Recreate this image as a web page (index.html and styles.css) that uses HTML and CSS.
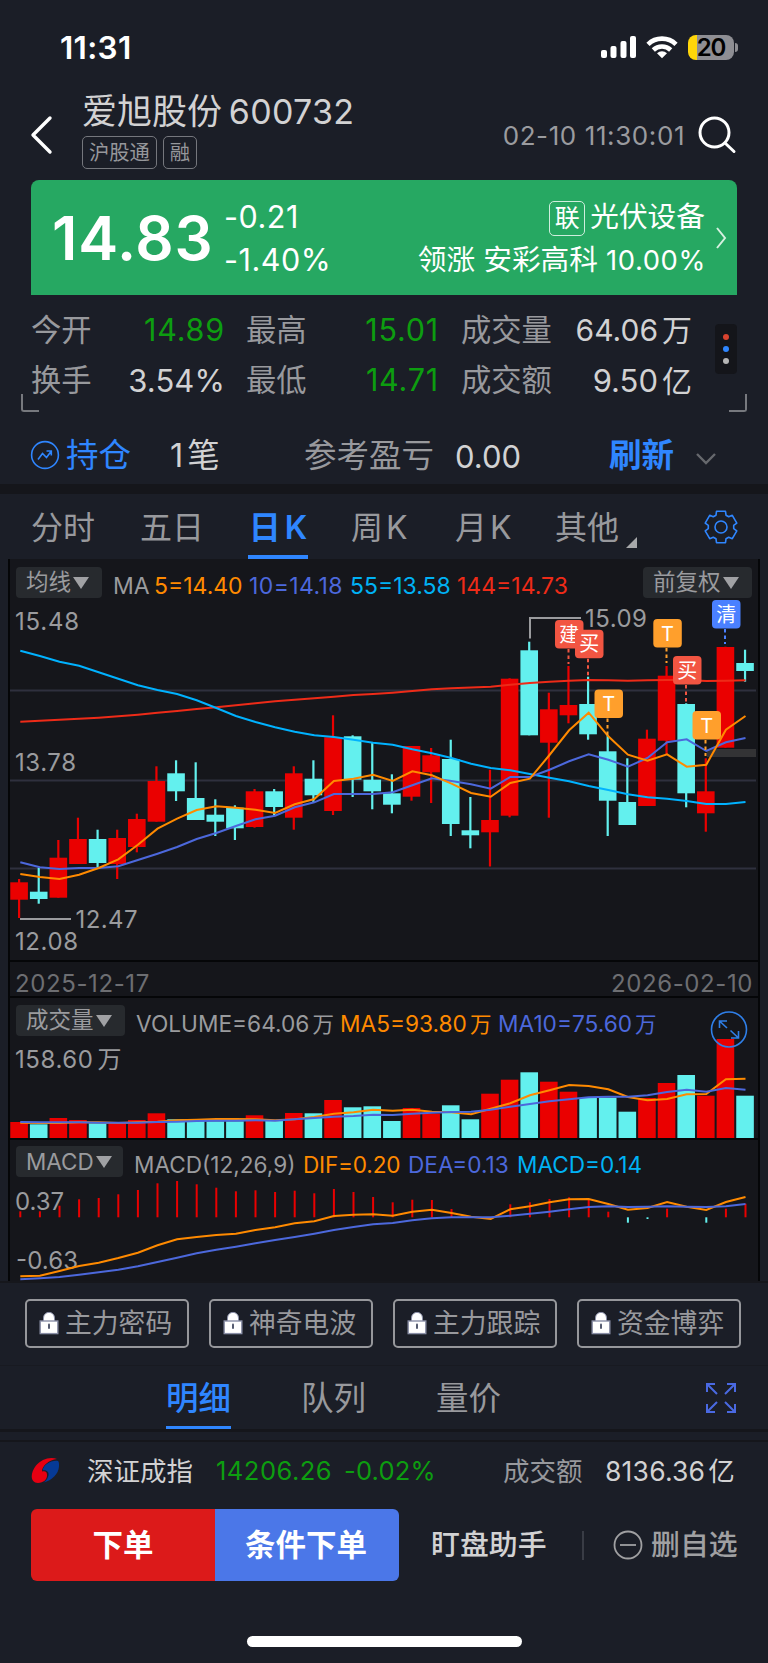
FILE: index.html
```html
<!DOCTYPE html>
<html lang="zh-CN">
<head>
    <meta charset="utf-8">
    <meta name="viewport" content="width=device-width, initial-scale=1">
    <title>爱旭股份 600732</title>
    <link rel="stylesheet" href="styles.css">
</head>
<body>

    <div class="status">
        <span class="time">11:31</span>
        <svg class="signal" width="36" height="24" viewBox="0 0 36 24" fill="#fff">
            <rect x="0" y="15" width="6" height="8" rx="2"/>
            <rect x="9.5" y="11" width="6" height="12" rx="2"/>
            <rect x="19.5" y="6" width="6" height="17" rx="2"/>
            <rect x="29" y="1" width="6" height="22" rx="2"/>
        </svg>
        <svg class="wifi" width="32" height="24" viewBox="0 0 32 24" fill="none" stroke="#fff" stroke-width="4.6">
            <path d="M2 9.3 A20 20 0 0 1 30 9.3"/>
            <path d="M7.3 15 A12.6 12.6 0 0 1 24.7 15"/>
            <path d="M16 23.3 L11 18.2 A7.2 7.2 0 0 1 21 18.2 Z" fill="#fff" stroke="none"/>
        </svg>
        <div class="battery"><span>20</span></div>
        <div class="nub"></div>
    </div>

    <div class="header">
        <svg class="back" width="24" height="42" viewBox="0 0 24 42" fill="none" stroke="#fff" stroke-width="3.4" stroke-linecap="round" stroke-linejoin="round">
            <path d="M20 4 L3 21 L20 38"/>
        </svg>
        <div class="title">
            <div class="name">爱旭股份 <span>600732</span></div>
            <div class="tags"><span>沪股通</span><span>融</span></div>
        </div>
        <div class="clock">02-10 11:30:01</div>
        <svg class="search" width="40" height="40" viewBox="0 0 40 40" fill="none" stroke="#fff" stroke-width="3" stroke-linecap="round">
            <circle cx="17.5" cy="17.5" r="14.5"/>
            <path d="M28 28 L37 36.5"/>
        </svg>
    </div>

    <div class="banner">
        <div class="price">14.83</div>
        <div class="change">
            <div>-0.21</div>
            <div>-1.40%</div>
        </div>
        <div class="sector">
            <div><span class="link">联</span>光伏设备</div>
            <div class="leader">领涨 安彩高科 <span>10.00%</span></div>
        </div>
        <svg width="13" height="22" viewBox="0 0 13 22" fill="none" stroke="#d6f0e0" stroke-width="2">
            <path d="M2 1 L10 11 L2 21"/>
        </svg>
    </div>

    <div class="stats">
        <div class="grid">
            <span class="label">今开</span><span class="val down">14.89</span>
            <span class="label">最高</span><span class="val down">15.01</span>
            <span class="label">成交量</span><span class="val">64.06<i>万</i></span>
            <span class="label">换手</span><span class="val pct">3.54%</span>
            <span class="label">最低</span><span class="val down">14.71</span>
            <span class="label">成交额</span><span class="val amt">9.50<i>亿</i></span>
        </div>
        <div class="more"><b class="red"></b><b class="blue"></b><b></b></div>
    </div>
    <div class="corners"><i class="left"></i><i class="right"></i></div>

    <div class="position">
        <svg width="30" height="30" viewBox="0 0 30 30" fill="none" stroke="#2f86ff" stroke-width="1.6">
            <circle cx="15" cy="15" r="13.4"/>
            <path d="M8 19.5 L12.5 13.5 L16.5 17.5 L21 11.5 M16.5 11 H21.3 V15.5"/>
        </svg>
        <span class="hold">持仓</span>
        <span class="count">1<i>笔</i></span>
        <span class="ref">参考盈亏</span>
        <span class="zero">0.00</span>
        <span class="refresh">刷新</span>
        <svg width="22" height="14" viewBox="0 0 22 14" fill="none" stroke="#66686d" stroke-width="2.4"><path d="M2 2 L11 11 L20 2"/></svg>
    </div>

    <div class="tabs">
        <span class="wide">分时</span>
        <span class="wide">五日</span>
        <span class="active">日<i>K</i></span>
        <span class="k">周<i>K</i></span>
        <span class="k">月<i>K</i></span>
        <span class="other">其他</span>
        <div class="tri"></div>
        <svg width="36" height="36" viewBox="-18 -18 36 36" fill="none" stroke="#2f86ff" stroke-width="1.6" stroke-linejoin="round">
            <path id="gear"/>
            <circle r="6"/>
        </svg>
    </div>

    <div class="chart">
        <div class="panel kline">
            <svg id="kline" width="748" height="401" viewBox="10 559 748 401"></svg>
            <div class="legend">
                <span class="select s1">均线<i></i></span>
                <span class="t1">MA</span>
                <span class="orange t2">5=14.40</span>
                <span class="indigo t3">10=14.18</span>
                <span class="cyan t4">55=13.58</span>
                <span class="red t5">144=14.73</span>
                <span class="select s4">前复权<i></i></span>
            </div>
        </div>
        <div class="dates"><span>2025-12-17</span><span>2026-02-10</span></div>
        <div class="panel volume">
            <svg id="volume" width="748" height="140" viewBox="10 998 748 140"></svg>
            <div class="legend">
                <span class="select s2">成交量<i></i></span>
                <span class="v1">VOLUME=64.06<em>万</em></span>
                <span class="orange v2">MA5=93.80<em>万</em></span>
                <span class="indigo v3">MA10=75.60<em>万</em></span>
            </div>
        </div>
        <div class="panel macd">
            <svg id="macd" width="748" height="141" viewBox="10 1140 748 141"></svg>
            <div class="legend">
                <span class="select s3">MACD<i></i></span>
                <span class="m1">MACD(12,26,9)</span>
                <span class="orange m2">DIF=0.20</span>
                <span class="indigo m3">DEA=0.13</span>
                <span class="cyan m4">MACD=0.14</span>
            </div>
        </div>
    </div>

    <div class="locks">
        <div><svg width="20" height="24"><use href="#lock"/></svg>主力密码</div>
        <div><svg width="20" height="24"><use href="#lock"/></svg>神奇电波</div>
        <div><svg width="20" height="24"><use href="#lock"/></svg>主力跟踪</div>
        <div><svg width="20" height="24"><use href="#lock"/></svg>资金博弈</div>
    </div>

    <div class="subtabs">
        <span class="active">明细</span>
        <span>队列</span>
        <span>量价</span>
        <svg width="30" height="30" viewBox="0 0 30 30" fill="none" stroke="#4a69e2" stroke-width="2">
            <path d="M1 9 V1 H9 M1 1 L11 11 M21 1 H29 V9 M29 1 L19 11 M1 21 V29 H9 M1 29 L11 19 M29 21 V29 H21 M29 29 L19 19"/>
        </svg>
    </div>
    <div class="gap"></div>

    <div class="index">
        <svg width="30" height="28" viewBox="0 0 30 28">
            <path fill="#e60012" d="M27 2 C20 -1 11 2.5 6 8.5 C0 16 0 26 8 26 C14 26 17.5 22 17 17.5 C16.8 14.5 15 13.8 12 14.5 C12 8.5 19 3 27 2 Z"/>
            <path fill="#063a96" d="M28 4 C21 3 13 8 12.8 13.3 C17 12.5 19.5 15.5 18.3 19 C17.5 22 15.5 24.5 13.5 25.5 C22 23.5 28.5 17 29 9.5 C29.2 6.5 29 5 28 4 Z"/>
        </svg>
        <span class="iname">深证成指</span>
        <span class="down ival">14206.26</span>
        <span class="down ipct">-0.02%</span>
        <span class="ilabel">成交额</span>
        <span class="iamt">8136.36<i>亿</i></span>
    </div>

    <div class="actions">
        <div class="order">下单</div>
        <div class="cond">条件下单</div>
        <span class="watch">盯盘助手</span>
        <div class="sep"></div>
        <svg width="30" height="30" viewBox="0 0 30 30" fill="none" stroke="#a0a0a2" stroke-width="1.8">
            <circle cx="15" cy="15" r="13.5"/>
            <path d="M7 15 H23"/>
        </svg>
        <span class="del">删自选</span>
    </div>
    <div class="home"></div>

    <svg width="0" height="0" class="defs">
        <symbol id="lock" viewBox="0 0 20 24">
            <path d="M4.5 11 V7 C4.5 -0.5 15.5 -0.5 15.5 7 V11" fill="#fff" stroke="#8b90a8" stroke-width="1"/>
            <rect x="1.2" y="10" width="17.6" height="12.6" fill="#fff" stroke="#8b90a8" stroke-width="1.4"/>
            <rect x="9" y="12.5" width="2" height="5.5" rx="1" fill="#555b70"/>
        </symbol>
    </svg>
    <script src="chart.js"></script>
</body>
</html>
```
FILE: styles.css
```css
* {
    box-sizing: border-box;
}

body {
    margin: 0;
    width: 768px;
    height: 1663px;
    overflow: hidden;
    background-color: #1b1e27;
    color: #d2d2d3;
    font-family: Inter, "Noto Sans CJK SC", sans-serif;
    font-size: 30px;
    line-height: 1;
    white-space: nowrap;
}

i, em {
    font-style: normal;
    margin-left: 4px;
}

svg {
    display: block;
    flex: none;
}

.defs {
    position: absolute;
}

/* status bar */
.status {
    height: 94px;
    padding: 0 30px 0 60px;
    display: flex;
    align-items: center;
    color: #fff;
}

.time {
    font-size: 31.5px;
    font-weight: 600;
    letter-spacing: 0.3px;
    width: 542px;
    padding-top: 1px;
}

.wifi {
    margin-left: 9px;
}

.battery {
    margin-left: 10px;
    width: 46px;
    height: 25px;
    border-radius: 8px;
    background: linear-gradient(to right, #ffd60a 9px, #8e8e93 9px);
    color: #000;
    font-size: 24px;
    font-weight: 600;
    text-align: center;
    line-height: 25px;
    letter-spacing: -1px;
}

.nub {
    width: 3px;
    height: 9px;
    margin-left: 1px;
    border-radius: 0 3px 3px 0;
    background-color: #8e8e93;
}

/* title */
.header {
    height: 86px;
    padding: 0 31px 0 30px;
    display: flex;
    align-items: center;
}

.back {
    margin-right: 28px;
    margin-top: -4px;
}

.title {
    width: 422px;
}

.name {
    font-size: 35px;
    line-height: 36px;
    margin-top: -12px;
}

.name span {
    font-size: 34px;
    letter-spacing: 0.3px;
    margin-left: -3px;
}

.tags {
    display: flex;
    gap: 6px;
    margin-top: 6px;
}

.tags span {
    height: 33px;
    padding: 0 6px;
    border: 1.5px solid #75777d;
    border-radius: 5px;
    font-size: 20.3px;
    line-height: 31px;
    color: #96979b;
}

.clock {
    width: 195px;
    font-size: 26px;
    letter-spacing: 0.6px;
    color: #9a9b9f;
    margin-top: -3px;
}

.search {
    margin-top: -5px;
}

/* price banner */
.banner {
    margin: 0 31px;
    height: 115px;
    border-radius: 8px 8px 0 0;
    background-color: #26a862;
    color: #fff;
    display: flex;
    align-items: center;
    padding-left: 21px;
}

.price {
    width: 172px;
    font-size: 60px;
    font-weight: 600;
    letter-spacing: 0.8px;
}

.change {
    width: 120px;
    font-size: 30.5px;
    letter-spacing: 0.5px;
}

.change div, .sector div {
    height: 43px;
    line-height: 43px;
}

.sector {
    width: 361px;
    display: flex;
    flex-direction: column;
    align-items: flex-end;
    font-size: 28.7px;
}

.sector .link {
    display: inline-block;
    width: 36px;
    height: 35px;
    margin-right: 5px;
    border: 1.5px solid #cfeedd;
    border-radius: 5px;
    font-size: 25px;
    line-height: 32px;
    text-align: center;
}

.leader {
    margin-right: -1px;
}

.leader span {
    font-size: 27.4px;
    letter-spacing: 0.6px;
}

.banner svg {
    margin-left: 10px;
}

/* open / high / low */
.stats {
    display: flex;
    height: 108px;
    padding: 10px 31px 0;
}

.grid {
    display: grid;
    grid-template-columns: 80px 114px 21px 61px 132px 22px 92px 139px;
    grid-template-rows: 50px 50px;
    width: 661px;
    align-items: center;
}

.grid .label:nth-child(6n+1) {
    grid-column: 1;
}

.grid .label:nth-child(6n+3) {
    grid-column: 4;
}

.grid .label:nth-child(6n+5) {
    grid-column: 7;
}

.label {
    color: #98999d;
    font-size: 30.3px;
}

.val {
    text-align: right;
    font-size: 30px;
}

.val.down {
    font-size: 30.5px;
    letter-spacing: 0.8px;
}

.val.pct {
    font-size: 31px;
    letter-spacing: 0.1px;
}

.val.amt {
    font-size: 31px;
}

.val.amt i {
    font-size: 30px;
}

.down {
    color: #0d9d10;
}

.more {
    width: 22px;
    height: 50px;
    margin: 19px 0 0 23px;
    border-radius: 4px;
    background-color: #14151a;
    display: flex;
    flex-direction: column;
    align-items: center;
    justify-content: center;
    gap: 6px;
}

.more b {
    width: 6px;
    height: 6px;
    border-radius: 3px;
    background-color: #b5b5b5;
}

.more b.red {
    background-color: #d9432f;
}

.more b.blue {
    background-color: #2f86ff;
}

.corners {
    height: 26px;
    margin: -9px 21px 0;
    display: flex;
    justify-content: space-between;
}

.corners i {
    width: 18px;
    height: 18px;
    margin: 0;
    border-bottom: 2px solid #77797e;
}

.corners .left {
    border-left: 2px solid #77797e;
    border-radius: 0 0 0 3px;
}

.corners .right {
    border-right: 2px solid #77797e;
    border-radius: 0 0 3px 0;
}

/* position row */
.position {
    height: 64px;
    padding: 6px 0 0 30px;
    display: flex;
    align-items: center;
    font-size: 32.5px;
}

.position span {
    padding-top: 3px;
}

.position .hold {
    width: 104px;
    margin-left: 6px;
    color: #2f86ff;
}

.position .count {
    width: 134px;
}

.position .ref {
    width: 151px;
    color: #98999d;
}

.position .zero {
    width: 154px;
    font-size: 31px;
}

.position .refresh {
    width: 86px;
    color: #2f86ff;
    font-weight: 700;
}

.position svg:last-child {
    margin-top: 8px;
}

/* period tabs */
.tabs {
    height: 75px;
    padding-left: 31px;
    border-top: 10px solid #15161b;
    display: flex;
    align-items: center;
    color: #98999d;
    font-size: 32px;
}

.tabs span {
    height: 64px;
    line-height: 65px;
}

.tabs .wide {
    width: 109px;
}

.tabs .active {
    width: 60px;
    margin: 0 42px 0 -1px;
    text-align: center;
    color: #2f86ff;
    font-weight: 600;
    border-bottom: 4px solid #2f86ff;
}

.tabs .k {
    width: 104px;
    padding-left: 1px;
}

.tabs .k i {
    margin-left: 3px;
}

.tabs .other {
    width: 68px;
    margin-left: -3px;
}

.tri {
    margin: 31px 66px 0 3px;
    border-left: 11px solid transparent;
    border-bottom: 11px solid #a7a8aa;
}

/* chart */
.chart {
    height: 722px;
    margin: 0 8px;
    border-left: 2px solid #050608;
    border-right: 2px solid #050608;
    background-color: #15161b;
    color: #9a9b9e;
}

.panel {
    display: grid;
    border-bottom: 2px solid #050608;
}

.panel svg, .panel .legend {
    grid-area: 1 / 1;
}

.panel svg {
    overflow: visible;
}

.macd {
    border-bottom: 0;
}

.legend {
    display: flex;
    height: 31px;
    margin: 8px 6px 0;
    align-items: center;
    font-size: 23px;
}

.volume .legend {
    margin-top: 7px;
    font-size: 22.7px;
}

.macd .legend {
    margin-top: 6px;
    font-size: 22.6px;
}

.legend em {
    font-size: 21.5px;
    margin-left: 3px;
}

.select {
    height: 31px;
    padding-left: 10px;
    border-radius: 4px;
    background-color: #272a2e;
    display: flex;
    align-items: center;
    font-size: 22.5px;
}

.legend > span:not(.select) {
    padding-top: 7px;
}

.select i {
    border: 8px solid transparent;
    border-top: 12px solid #a0a1a4;
    border-bottom: 0;
    margin-left: 2px;
}

.s1 { width: 86px; margin-right: 11px; }
.s2 { width: 109px; margin-right: 11px; }
.s3 { width: 107px; margin-right: 11px; padding-top: 1px; }
.s4 { width: 109px; margin-left: auto; }
.t1 { width: 41px; }
.t2 { width: 95px; }
.t3 { width: 101px; letter-spacing: 0.4px; }
.t4 { width: 107px; }
.v1 { width: 204px; }
.v2 { width: 158px; }
.m1 { width: 169px; }
.m2 { width: 105px; letter-spacing: -0.2px; }
.m3 { width: 109px; }

.orange { color: #ff8a00; }
.indigo { color: #4c68dc; }
.cyan { color: #00b2f5; }
.legend .red { color: #ee2b18; }

.dates {
    display: flex;
    justify-content: space-between;
    height: 36px;
    padding: 4px 5px 0;
    line-height: 36px;
    font-size: 24px;
    letter-spacing: 0.6px;
    border-bottom: 2px solid #050608;
    color: #6d6e72;
}

.label-text {
    font-size: 24px;
    fill: #9a9b9e;
}

.badge-text {
    font-size: 20px;
    fill: #fff;
    text-anchor: middle;
}

/* locked indicators */
.locks {
    height: 85px;
    padding: 16px 27px 0 25px;
    border-top: 2px solid #16171c;
    border-bottom: 1px solid #181a21;
    display: flex;
    justify-content: space-between;
}

.locks div {
    width: 164px;
    height: 49px;
    border: 2px solid #96979b;
    border-radius: 5px;
    padding-left: 12px;
    display: flex;
    align-items: center;
    font-size: 26.8px;
    color: #98999d;
}

.locks svg {
    margin-right: 6px;
    margin-top: -2px;
}

.subtabs {
    height: 66px;
    padding: 0 32px 0 166px;
    border-bottom: 3px solid #15161b;
    display: flex;
    align-items: center;
    color: #98999d;
    font-size: 32.5px;
}

.subtabs span {
    height: 63px;
    line-height: 65px;
    margin-right: 70px;
}

.subtabs .active {
    color: #2f86ff;
    font-weight: 500;
    border-bottom: 3px solid #2f86ff;
}

.subtabs svg {
    margin-left: auto;
}

.gap {
    height: 10px;
    border-bottom: 2px solid #15161b;
}

/* market index */
.index {
    height: 58px;
    padding-left: 30px;
    display: flex;
    align-items: center;
    font-size: 26.5px;
}

.iname { width: 129px; margin-left: 27px; }
.ival { width: 128px; font-size: 25.5px; letter-spacing: 0.5px; }
.ipct { width: 159px; font-size: 25.5px; letter-spacing: 0.2px; }
.ilabel { width: 102px; color: #98999d; }
.iamt { letter-spacing: 0.2px; }
.iamt i { margin-left: 3px; }

/* bottom buttons */
.actions {
    height: 72px;
    margin-top: 9px;
    padding-left: 31px;
    display: flex;
    align-items: center;
    font-size: 28.9px;
}

.order, .cond {
    width: 184px;
    height: 72px;
    line-height: 72px;
    font-size: 30.5px;
    font-weight: 700;
    color: #fff;
    text-align: center;
}

.order {
    border-radius: 6px 0 0 6px;
    background-color: #dc1a1a;
}

.cond {
    border-radius: 0 6px 6px 0;
    background-color: #4b77e8;
    text-indent: -2px;
}

.watch {
    width: 151px;
    margin-left: 32px;
    font-weight: 500;
}

.sep {
    width: 2px;
    height: 29px;
    margin-right: 29px;
    background-color: #393c45;
}

.del {
    margin-left: 8px;
    color: #a0a0a2;
    font-weight: 500;
}

.home {
    width: 275px;
    height: 11px;
    margin: 55px 0 0 247px;
    border-radius: 6px;
    background-color: #fff;
}
```
FILE: chart.js
```js
const RED = '#ea0000';
const TEAL = '#63f0ee';
const STEP = 19.62;

// [up, high, body top, body bottom, low]
const candles = [
    [1, 879, 882.3, 899.7, 918], [0, 867.7, 891.7, 899, 903.7], [1, 840, 857.7, 897.7, 897.7],
    [1, 817.7, 839, 864, 864], [0, 829.7, 839, 863, 867.7], [1, 829.7, 838, 864, 879],
    [1, 813.7, 819, 847, 852.3], [1, 766.3, 781, 821.7, 821.7], [0, 760.3, 773.3, 791.3, 801],
    [0, 762.3, 798, 820, 820], [0, 799.3, 814.7, 821.7, 836], [0, 805.3, 807.7, 828.3, 840],
    [1, 789, 791.3, 827, 827.7], [0, 789, 791.3, 807, 815.3], [1, 766.3, 773.3, 817.7, 829.7],
    [0, 760.3, 778.7, 795.3, 802], [1, 715.3, 737.3, 811, 815], [0, 735.3, 736.3, 779.7, 797],
    [0, 742.7, 779.7, 791.3, 809.3], [0, 774.3, 793.3, 804.7, 813.3], [1, 746, 746, 796.7, 800.7],
    [1, 748, 755.3, 772.3, 803], [0, 739.7, 759, 824, 836], [0, 797, 830.3, 835.3, 848.3],
    [1, 769.7, 820, 832.3, 866.5], [1, 678.3, 678.7, 815.7, 817.3], [0, 641.7, 650.3, 735.3, 735.3],
    [1, 692.7, 709.3, 742.7, 817.7], [1, 666, 705, 715.3, 723.3], [0, 676.7, 704, 734.3, 739.7],
    [0, 735, 751.3, 800.7, 836], [0, 758.3, 802, 825, 825], [1, 729.7, 738.7, 806, 806],
    [1, 666, 675.7, 740.7, 754], [0, 703.3, 704, 793.3, 807.3], [1, 758.3, 791.3, 813.3, 831.7],
    [1, 646.7, 647, 747.7, 747.7], [0, 649.7, 663, 671, 681.7]
];

const ma5 = [874, 877, 879, 874.7, 868, 859.3, 844.7, 828.7, 818.7, 810, 806.3, 807.7, 809.7, 813, 804.3, 799, 781, 778.7, 774.7, 781, 771.3, 775.3, 783.7, 793, 796.7, 783, 778.7, 755, 730.3, 712.7, 736.3, 754.7, 760.7, 754.3, 766.7, 764.7, 729.7, 716];
const ma10 = [862.3, 867.3, 869, 868, 868, 866.3, 860, 853.7, 847, 839, 833, 826, 819.3, 815.7, 807.3, 802.3, 794, 794, 794, 792.3, 785.3, 778.3, 781, 784.3, 788.7, 777, 777, 769.7, 761.3, 754.3, 759.7, 766.7, 758, 742.3, 739.3, 751, 742.3, 738];
const ma55 = [650.7, 656, 661.7, 665.7, 672.3, 678.7, 685.3, 690, 694, 700.3, 708, 716, 722, 727.3, 731.7, 735.3, 737, 739.7, 742.7, 744.7, 749.3, 753.3, 758, 763.7, 768, 770.3, 774, 777.7, 781.3, 786, 790, 794.3, 797.3, 798.7, 801, 804, 804, 802];
const ma144 = [721.7, 720.7, 719.7, 718.7, 717.7, 716.3, 714.7, 712.7, 711, 709, 707.3, 705.3, 703.3, 701.3, 699.7, 698.3, 696.7, 695, 694, 692.7, 691, 689.3, 688.3, 687.6, 686.7, 684.7, 683, 681.7, 680.7, 680, 680.3, 680.7, 680.3, 680, 680, 681, 680.7, 680.3];

const vol = [1122, 1124.3, 1118, 1120, 1123.3, 1123, 1120, 1113.3, 1119.3, 1119, 1121.3, 1121.3, 1115.3, 1120.7, 1113, 1113.3, 1100, 1107.3, 1106.3, 1121, 1108, 1113.7, 1105.3, 1119.3, 1093.7, 1079.7, 1072.3, 1081.7, 1091.7, 1098, 1097.7, 1111.7, 1098, 1083, 1075, 1095.7, 1039, 1095.7];
const vma5 = [1122.7, 1123, 1123, 1122.3, 1122.3, 1123, 1122.3, 1121.7, 1120.3, 1119.7, 1119, 1119, 1119.3, 1120.3, 1119.3, 1117, 1113.7, 1112.3, 1109.7, 1110.7, 1109.7, 1111.7, 1112.3, 1114.3, 1108.7, 1103.3, 1095.3, 1090.3, 1085, 1086, 1089.3, 1097, 1100.3, 1099, 1094.3, 1094, 1079.3, 1078.7];
const vma10 = [1122, 1122.3, 1122.3, 1122.3, 1122.7, 1122.7, 1122.7, 1122, 1121.7, 1121, 1120.7, 1120.7, 1120.3, 1120.7, 1119.3, 1118, 1116.7, 1116, 1114.7, 1115, 1113.7, 1112.7, 1112, 1111.7, 1109.7, 1106.7, 1104, 1101.3, 1099.3, 1097.3, 1096.7, 1096.7, 1095.3, 1092, 1089.7, 1091.7, 1088, 1089.7];

const hist = [1211.3, 1211.3, 1205.7, 1199.3, 1198, 1194.3, 1190, 1183.3, 1181, 1184.3, 1187.7, 1191.3, 1190.3, 1192, 1190.7, 1193.3, 1189, 1192, 1197, 1202.3, 1199.7, 1200, 1209, 1217.3, 1217.3, 1204.3, 1202.3, 1199, 1197.3, 1200, 1211.7, 1222.7, 1219, 1208.7, 1217.3, 1222.7, 1208.7, 1203.7];
const dif = [1276.3, 1275.7, 1271, 1266, 1262.7, 1258, 1252.7, 1245.3, 1239.3, 1237, 1235, 1233.7, 1230, 1227.3, 1223.3, 1221.3, 1216, 1214.7, 1214.3, 1215.7, 1211.7, 1209.7, 1213, 1216.7, 1219, 1209.3, 1206.3, 1202.3, 1199.3, 1199, 1204, 1209.7, 1208, 1202, 1206.7, 1210, 1202, 1197];
const dea = [1279.3, 1278.3, 1277, 1274.7, 1272.3, 1269.7, 1266.3, 1262, 1257.7, 1253.3, 1249.7, 1246.7, 1243.3, 1240, 1237, 1233.7, 1230, 1227, 1224.3, 1223, 1220.3, 1218.3, 1217.3, 1217.3, 1217.3, 1215.7, 1213.7, 1211.7, 1209.3, 1207, 1206.3, 1207, 1206.7, 1206.3, 1206.7, 1207, 1206.3, 1204];

// [text, x, y, color, stem x, stem end]
const badges = [
    ['建', 555, 620, '#f25542', 568.5, 664],
    ['买', 575, 629.7, '#f25542', 588, 676],
    ['T', 594.5, 689.5, '#ff9f2c', 607.5, 735],
    ['T', 653.3, 619, '#ff9f2c', 666.5, 663],
    ['买', 673, 656, '#f25542', 686, 703],
    ['T', 692.5, 711, '#ff9f2c', 705.5, 756],
    ['清', 712, 600, '#4a80ff', 725, 644]
];

function rect(x, y, w, h, color, extra) {
    return `<rect x="${x}" y="${y}" width="${w}" height="${h}" fill="${color}" ${extra || ''}/>`;
}

function line(points, color) {
    const pts = points.map((y, i) => (20.3 + i * 19.6).toFixed(1) + ',' + y).join(' ');
    return `<polyline points="${pts}" fill="none" stroke="${color}" stroke-width="2"/>`;
}

function text(str, x, y, width) {
    return `<text class="label-text" x="${x}" y="${y}" textLength="${width}">${str}</text>`;
}

function drawKline() {
    let out = '';
    for (const y of [690.5, 780.5, 868.5])
        out += rect(10, y - 1, 746, 2, '#2f303e');
    out += rect(707, 749, 49, 8, '#333335');
    candles.forEach(([up, high, top, bottom, low], i) => {
        const x = 19.1 + i * STEP;
        const color = up ? RED : TEAL;
        out += rect(x - 1.1, high, 2.2, low - high, color);
        out += rect(x - 8.8, top, 17.6, bottom - top, color);
    });
    out += line(ma144, '#ee2b18') + line(ma55, '#00b2ff') + line(ma10, '#4c68dc') + line(ma5, '#ff8a00');
    out += text('15.48', 15, 630, 64) + text('13.78', 15, 771, 61) + text('12.08', 15, 950, 63);
    out += text('12.47', 75.5, 928, 62) + text('15.09', 585, 627, 62);
    out += rect(20, 918, 51, 2, '#9a9b9e');
    out += '<path d="M530 638.5 V618 H581" fill="none" stroke="#9a9b9e" stroke-width="2"/>';
    for (const [str, x, y, color, sx, end] of badges) {
        out += `<path d="M${sx} ${y + 29} V${end}" stroke="${color}" stroke-width="2" stroke-dasharray="3.5 3"/>`;
        out += rect(x, y, 28.5, 28.5, color, 'rx="4"');
        out += `<text class="badge-text" x="${x + 14.2}" y="${y + 21.5}">${str}</text>`;
    }
    document.getElementById('kline').innerHTML = out;
}

function drawVolume() {
    let out = '';
    vol.forEach((y, i) => {
        out += rect(10.3 + i * STEP, y, 17.6, 1138 - y, candles[i][0] ? RED : TEAL);
    });
    out += line(vma5, '#ff8a00') + line(vma10, '#4c68dc');
    out += text('158.60', 15, 1068, 78) + text('万', 97.5, 1068, 23);
    out += '<g fill="none" stroke="#2f7fe8" stroke-width="1.6"><circle cx="729" cy="1029.5" r="17.5"/>';
    out += '<path d="M727 1028 L719.5 1021 M719.5 1028 V1021 H727 M730.5 1030.5 L738.5 1038 M731 1038 H738.5 V1031"/></g>';
    document.getElementById('volume').innerHTML = out;
}

function drawMacd() {
    const zero = 1217.3;
    let out = text('0.37', 15, 1210, 49) + text('-0.63', 16, 1269, 62);
    hist.forEach((y, i) => {
        const x = 19.3 + i * 19.6;
        if (y < zero)
            out += rect(x, y, 2, zero - y, RED);
        else
            out += rect(x, zero, 2, y - zero, TEAL);
    });
    out += line(dif, '#ff8a00') + line(dea, '#4c68dc');
    document.getElementById('macd').innerHTML = out;
}

// six teeth around the hub
function drawGear() {
    let d = '';
    for (let i = 0; i < 6; i++) {
        for (const [off, r] of [[-23, 12.8], [-16, 16.3], [16, 16.3], [23, 12.8]]) {
            const a = (i * 60 + off) * Math.PI / 180;
            d += (d ? 'L' : 'M') + (r * Math.sin(a)).toFixed(1) + ' ' + (-r * Math.cos(a)).toFixed(1);
        }
    }
    document.getElementById('gear').setAttribute('d', d + 'Z');
}

drawKline();
drawVolume();
drawMacd();
drawGear();
```
